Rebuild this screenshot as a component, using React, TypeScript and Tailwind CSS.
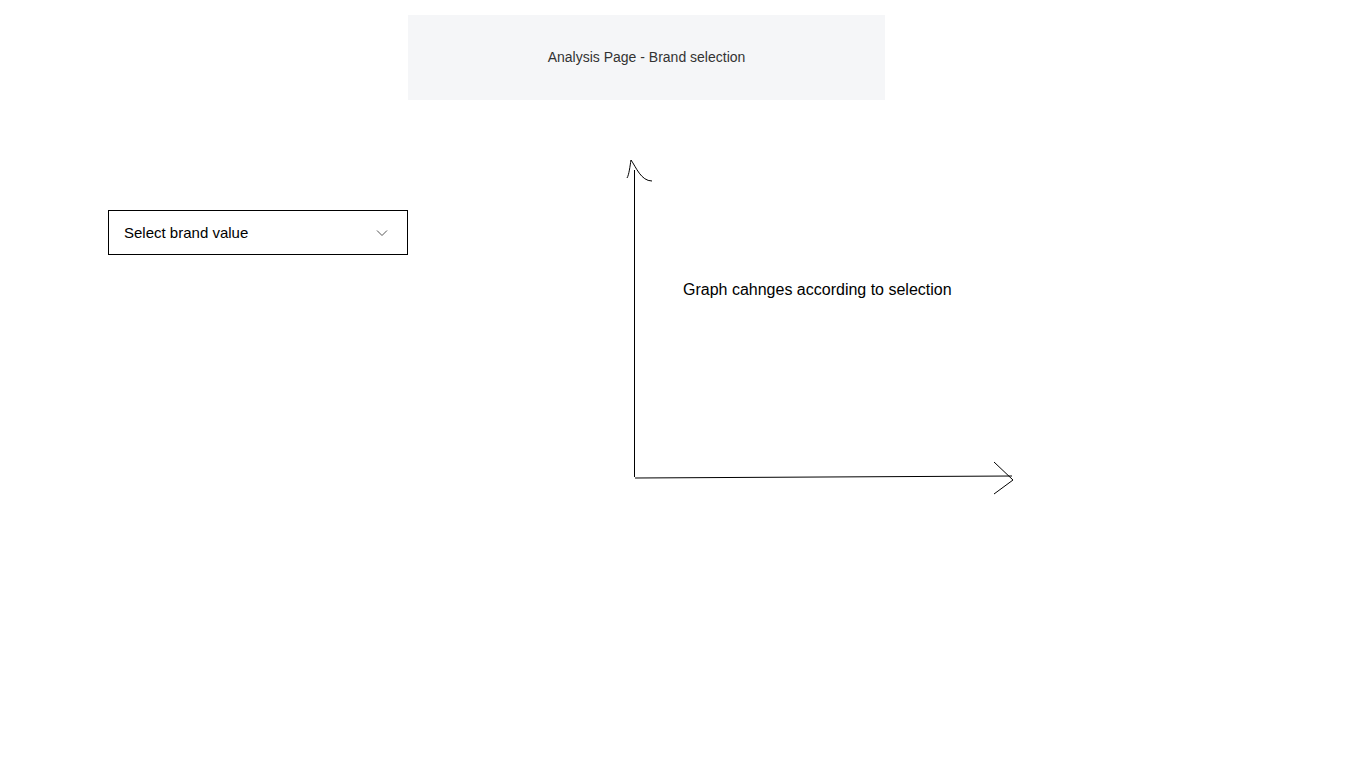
import React from "react";

const font = { fontFamily: '"Liberation Sans", Arial, sans-serif' };

function Graph() {
  return (
    <div className="relative w-[400px] h-[350px] shrink-0">
      <svg width="400" height="350" viewBox="0 0 400 350" fill="none" stroke="#000" strokeWidth="1">
        {/* y axis */}
        <line x1="14.5" y1="20" x2="14.5" y2="327" />
        <path d="M7 28 C 9 25, 10 16, 11 10 C 16 17, 21 31, 32 31" />
        {/* x axis */}
        <line x1="15" y1="328" x2="392" y2="326" />
        <path d="M374 312 L393 330 L374 344" />
      </svg>
      <div className="absolute left-[63px] top-[128px] text-[16px] text-black whitespace-nowrap">
        Graph cahnges according to selection
      </div>
    </div>
  );
}

export default function App() {
  return (
    <div className="w-[1366px] h-[768px] bg-white" style={font}>
      {/* header */}
      <div className="ml-[408px] pt-[15px]">
        <div className="w-[477px] h-[85px] bg-[#f5f6f8] flex items-center justify-center text-[14px] text-[#333]">
          Analysis Page - Brand selection
        </div>
      </div>

      <div className="flex items-start pl-[108px] pt-[50px]">
        {/* dropdown */}
        <div className="mt-[60px] w-[300px] h-[45px] border border-black flex items-center justify-between pl-[15px] pr-[19px] pt-[1px]">
          <span className="text-[15px] text-black">Select brand value</span>
          <svg width="12" height="8" viewBox="0 0 12 8" fill="none" stroke="#555" strokeWidth="1">
            <path d="M1 1.5 L6 6.5 L11 1.5" />
          </svg>
        </div>

        <div className="ml-[212px]">
          <Graph />
        </div>
      </div>
    </div>
  );
}
